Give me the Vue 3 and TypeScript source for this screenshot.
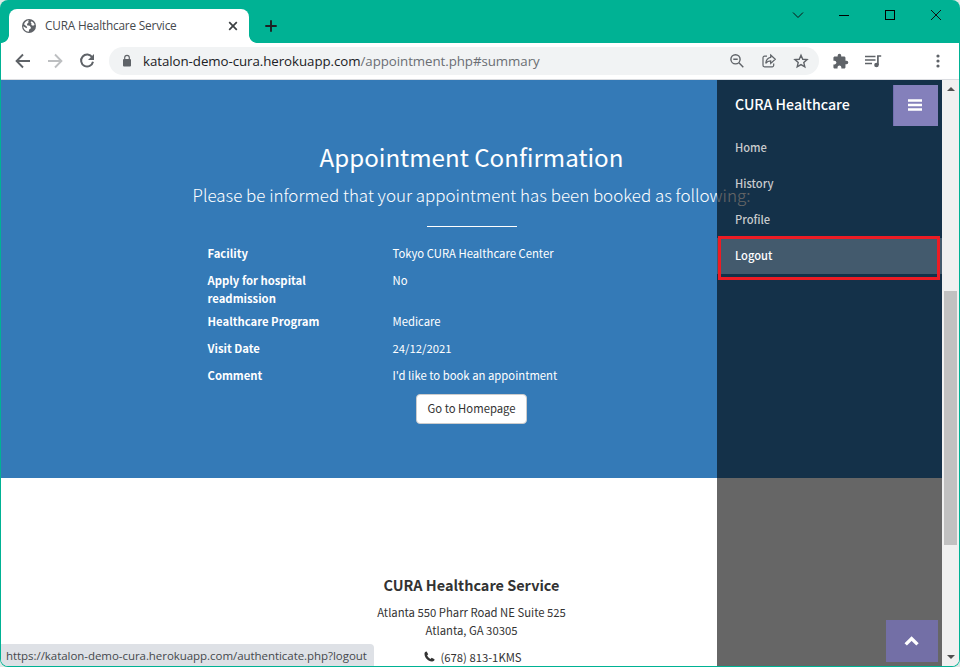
<script setup lang="ts">
interface Detail { label: string; value: string }
interface MenuItem { label: string; active?: boolean }

const details: Detail[] = [
  { label: 'Facility', value: 'Tokyo CURA Healthcare Center' },
  { label: 'Apply for hospital readmission', value: 'No' },
  { label: 'Healthcare Program', value: 'Medicare' },
  { label: 'Visit Date', value: '24/12/2021' },
  { label: 'Comment', value: "I'd like to book an appointment" },
]

const menu: MenuItem[] = [
  { label: 'Home' },
  { label: 'History' },
  { label: 'Profile' },
  { label: 'Logout', active: true },
]
</script>

<template>
  <div class="desktop">
    <div class="window">
      <header class="titlebar">
        <div class="tab">
          <svg class="globe" viewBox="0 0 16 16" width="16" height="16">
            <circle cx="8" cy="8" r="7" fill="#5f6368" />
            <path d="M8.300 2.300C7.200 3 7.100 3.700 7.500 4.500L6.200 5.800 6 7.300l2.600.5 1.300 1.500-.3 1.500-1.500.6-.3 2.300C4.800 13.500 2.400 11.300 2.200 8.300l3.300 1.900.7-1.200L3 6.300C3.700 4 5.600 2.400 8.300 2.300z" fill="#fff" />
            <path d="M10.600 3.200c1.500.7 2.600 2 3 3.800l-1.600.8-1.700-.9.2-1.500-.9-.9z" fill="#fff" />
          </svg>
          <span class="tab-title">CURA Healthcare Service</span>
          <svg class="tab-close" viewBox="0 0 10 10" width="10" height="10">
            <path d="M1.200 1.200l7.600 7.600M8.800 1.200L1.200 8.800" stroke="#3c4043" stroke-width="1.700" />
          </svg>
        </div>
        <svg class="new-tab" viewBox="0 0 12 12" width="12" height="12">
          <path d="M6 .3v11.400M.3 6h11.400" stroke="#1f2124" stroke-width="1.900" />
        </svg>
        <div class="controls">
          <svg viewBox="0 0 12 12" width="12" height="12"><path d="M1 3.500l5 5 5-5" fill="none" stroke="#111" /></svg>
          <svg viewBox="0 0 12 12" width="12" height="12"><path d="M1 6.500h10" stroke="#000" /></svg>
          <svg viewBox="0 0 12 12" width="12" height="12"><rect x="1.500" y="1.500" width="9" height="9" fill="none" stroke="#000" /></svg>
          <svg viewBox="0 0 12 12" width="12" height="12"><path d="M1 1l10 10M11 1L1 11" stroke="#111" /></svg>
        </div>
      </header>

      <nav class="toolbar">
        <div class="nav-icons">
          <svg viewBox="0 0 16 16" width="16" height="16"><path d="M8 1.500L1.600 8 8 14.500M1.800 8H15" fill="none" stroke="#5f6368" stroke-width="1.900" /></svg>
          <svg viewBox="0 0 16 16" width="16" height="16"><path d="M8 1.500L14.400 8 8 14.500M14.200 8H1" fill="none" stroke="#bdbfc1" stroke-width="1.900" /></svg>
          <svg viewBox="0 0 16 16" width="16" height="16">
            <path d="M13.200 4.300A6 6 0 1 0 14 8.800" fill="none" stroke="#5f6368" stroke-width="2" />
            <path d="M15 1v6H9z" fill="#5f6368" />
          </svg>
        </div>
        <div class="omnibox">
          <svg class="lock" viewBox="0 0 10 14" width="10" height="14">
            <rect x="1" y="5" width="8" height="7.500" rx="1" fill="#5f6368" />
            <path d="M2.700 5.500V3.600a2.300 2.300 0 0 1 4.600 0v1.900" fill="none" stroke="#5f6368" stroke-width="1.200" />
          </svg>
          <span class="url">katalon-demo-cura.herokuapp.com<span class="path">/appointment.php#summary</span></span>
          <div class="omni-icons">
            <svg viewBox="0 0 16 16" width="16" height="16" fill="none" stroke="#5f6368" stroke-width="1.400">
              <circle cx="6.500" cy="6.300" r="4.600" /><path d="M9.900 9.700l4.400 4.500M4.300 6.300h4.400" />
            </svg>
            <svg viewBox="0 0 16 16" width="16" height="16" fill="none" stroke="#5f6368" stroke-width="1.200">
              <path d="M6 3.200H3.500a1.500 1.500 0 0 0-1.500 1.500v7.600a1.500 1.500 0 0 0 1.500 1.500h7.700a1.500 1.500 0 0 0 1.500-1.500V10.500" />
              <path d="M9.700 2l4.600 4.200-4.600 4.200V7.900C7.400 7.900 6 8.600 4.700 10.400 5.100 7.200 6.800 4.900 9.700 4.400z" />
            </svg>
            <svg viewBox="0 0 16 16" width="16" height="16" fill="none" stroke="#5f6368" stroke-width="1.400">
              <path d="M8 2.200l1.750 4.050 4.350.4-3.300 2.900 1 4.300L8 11.550 4.200 13.850l1-4.300-3.300-2.900 4.350-.4z" />
            </svg>
          </div>
        </div>
        <svg class="puzzle" viewBox="0 0 24 24" width="17" height="17" fill="#5f6368">
          <path d="M20.500 11H19V7c0-1.100-.9-2-2-2h-4V3.500a2.500 2.500 0 0 0-5 0V5H4c-1.100 0-1.990.9-1.990 2v3.800H3.500c1.490 0 2.700 1.210 2.700 2.700s-1.210 2.700-2.700 2.700H2V20c0 1.100.9 2 2 2h3.800v-1.500c0-1.490 1.210-2.700 2.700-2.700s2.700 1.210 2.700 2.700V22H17c1.100 0 2-.9 2-2v-4h1.500a2.500 2.500 0 0 0 0-5z" />
        </svg>
        <svg class="queue" viewBox="0 0 17 14" width="17" height="14">
          <path d="M0 2.500h10.500M0 6h10.500M0 9.500h7" stroke="#5f6368" stroke-width="1.700" />
          <path d="M12.900 11V2h3.300" fill="none" stroke="#5f6368" stroke-width="1.700" />
          <circle cx="11.500" cy="11" r="2.300" fill="#5f6368" />
        </svg>
        <svg class="kebab" viewBox="0 0 4 14" width="4" height="14" fill="#5f6368">
          <circle cx="2" cy="2" r="1.600" /><circle cx="2" cy="7" r="1.600" /><circle cx="2" cy="12" r="1.600" />
        </svg>
      </nav>

      <div class="viewport">
        <main class="page">
          <section class="confirmation">
            <h2>Appointment Confirmation</h2>
            <p class="lead">Please be informed that your appointment has been booked as following:</p>
            <hr />
            <dl>
              <div v-for="d in details" :key="d.label" class="row">
                <dt>{{ d.label }}</dt>
                <dd>{{ d.value }}</dd>
              </div>
            </dl>
            <a class="home-btn">Go to Homepage</a>
          </section>
          <footer>
            <h4>CURA Healthcare Service</h4>
            <p>Atlanta 550 Pharr Road NE Suite 525<br />Atlanta, GA 30305</p>
            <p class="phone">
              <svg viewBox="0 0 11 11" width="11" height="11">
                <path d="M2.600.5L4.200 3.300 3.100 4.500c.8 1.600 1.900 2.600 3.400 3.400l1.200-1.100 2.800 1.500c.2 1.300-1 2.400-2.600 2.300C3.900 10.200.7 6.900.5 3.100.4 1.600 1.400.4 2.600.5z" fill="#333" />
              </svg>
              <span>(678) 813-1KMS</span>
            </p>
          </footer>
        </main>

        <aside class="sidebar">
          <div class="brand">
            <span>CURA Healthcare</span>
            <button class="toggle" type="button">
              <svg viewBox="0 0 15 13" width="15" height="13"><path d="M0 1.500h14M0 6h14M0 10.500h14" stroke="#fff" stroke-width="2.500" /></svg>
            </button>
          </div>
          <ul>
            <li v-for="m in menu" :key="m.label" :class="{ active: m.active }">{{ m.label }}</li>
          </ul>
          <button class="to-top" type="button">
            <svg viewBox="0 0 16 12" width="16" height="12"><path d="M1.700 9.400l5.900-5.800 5.900 5.800" fill="none" stroke="#fff" stroke-width="3.400" /></svg>
          </button>
        </aside>
        <div class="marker"></div>

        <div class="scrollbar">
          <svg viewBox="0 0 8 4" width="8" height="4"><path d="M0 4l4-4 4 4z" fill="#505050" /></svg>
          <div class="thumb"></div>
          <svg viewBox="0 0 8 4" width="8" height="4"><path d="M0 0l4 4 4-4z" fill="#505050" /></svg>
        </div>
        <div class="status">https://katalon-demo-cura.herokuapp.com/authenticate.php?logout</div>
      </div>
    </div>
  </div>
</template>

<style>
body { overflow: hidden; }
</style>

<style scoped>
* { box-sizing: border-box; }
h2, h4, p, dl, dd, ul, hr { margin: 0; padding: 0; }
svg { display: block; flex: none; }
button { border: 0; padding: 0; display: flex; align-items: center; justify-content: center; }

.desktop { width: 960px; height: 667px; background: #dfe9e6; }
.window {
  width: 960px; height: 667px; display: flex; flex-direction: column; overflow: hidden;
  background: #00b294; border-radius: 8px; padding: 0 1px 1px;
  font-family: "Open Sans", "Noto Sans", sans-serif;
}

.titlebar { height: 43px; display: flex; align-items: flex-start; padding-left: 8px; flex: none; }
.tab {
  position: relative; width: 240px; height: 34px; margin-top: 9px; padding: 0 11px 0 12px;
  background: #fff; border-radius: 8px 8px 0 0; display: flex; align-items: center;
}
.tab::before, .tab::after { content: ""; position: absolute; bottom: 0; width: 8px; height: 8px; }
.tab::before { left: -8px; background: radial-gradient(circle at 0 0, transparent 7.500px, #fff 8.200px); }
.tab::after { right: -8px; background: radial-gradient(circle at 100% 0, transparent 7.500px, #fff 8.200px); }
.tab-title {
  margin-left: 8px; padding-bottom: 2px; flex: 1; font-size: 11.800px; letter-spacing: -.19px; color: #45494d;
  white-space: nowrap;
}
.new-tab { margin: 20px 0 0 16px; }
.controls { margin: 9px 17px 0 auto; display: flex; gap: 34px; }

.toolbar {
  height: 37px; flex: none; display: flex; align-items: center; background: #fff;
  border-bottom: 1px solid #dadce0; padding: 0 19px 0 14px;
}
.nav-icons { display: flex; gap: 16px; }
.omnibox {
  width: 710px; height: 28px; margin-left: 14px; padding: 0 10px 0 13px; border-radius: 14px;
  background: #f1f3f4; display: flex; align-items: center;
}
.url { margin-left: 11px; flex: 1; font-size: 13.300px; letter-spacing: -.06px; color: #202124; white-space: nowrap; }
.path { color: #6a6e73; }
.omni-icons { display: flex; gap: 16px; }
.puzzle { margin-left: 13px; }
.queue { margin-left: 16px; }
.kebab { margin-left: auto; }

.viewport {
  position: relative; flex: 1; display: flex; min-height: 0; background: #fff; overflow: hidden;
  border-radius: 0 0 7px 7px;
}
.page {
  flex: 1; min-width: 0; font-family: "Noto Sans CJK SC", sans-serif; font-size: 11.300px; line-height: 18px;
  text-align: center;
}
.confirmation {
  height: 398px; background: #347ab7; color: #fff; display: flex; flex-direction: column; align-items: center;
  padding-top: 62px;
}
h2 { font-size: 24.150px; line-height: 30px; font-weight: 400; }
.lead { margin-top: 9px; font-size: 16.950px; line-height: 27px; font-weight: 300; white-space: nowrap; }
hr { width: 90px; border: 0; border-top: 1px solid #fff; margin-top: 18px; }
dl { margin-top: 17px; width: 528px; text-align: left; }
.row { display: grid; grid-template-columns: 120px 1fr; column-gap: 65px; padding-bottom: 9px; }
.row:nth-child(2) { padding-bottom: 5px; }
dt { font-weight: 700; }
.home-btn {
  width: 111px; height: 30px; margin-top: 1px; border: 1px solid #ccc; border-radius: 4px; background: #fff;
  color: #333; line-height: 27px;
}
footer { padding-top: 97px; color: #333; }
h4 { font-size: 14.460px; line-height: 20px; font-weight: 700; }
footer p { margin-top: 8px; }
footer .phone { display: flex; justify-content: center; gap: 5px; margin-top: 9px; padding-left: 3px; }
.phone svg { margin-top: 3px; }

.sidebar {
  position: absolute; top: 0; right: 17px; bottom: 0; width: 225px; background: rgba(0, 0, 0, .6);
  font-family: "Noto Sans CJK SC", sans-serif; font-weight: 500; color: #fff; display: flex; flex-direction: column;
}
.brand {
  height: 50px; padding: 5px 4px 4px 18px; display: flex; align-items: center; justify-content: space-between;
  font-size: 14.200px; flex: none;
}
.brand span { line-height: 20px; margin-top: -3px; }
.toggle { width: 45px; height: 41px; background: #8480bb; border-left: 1px solid #736fb0; }
.toggle svg { margin-right: 1px; }
ul { list-style: none; }
li { height: 36px; line-height: 34px; padding-left: 18px; font-size: 11.150px; color: #c9cbcd; }
.active { background: rgba(255, 255, 255, .2); color: #fff; }
.to-top { width: 52px; height: 42px; margin: auto 4px 4px auto; background: #736fa6; }
.marker { position: absolute; left: 717px; top: 156px; width: 222px; height: 44px; border: 3px solid #ed1c24; }

.scrollbar {
  width: 17px; flex: none; background: #f0f0f0; display: flex; flex-direction: column; align-items: center;
  padding: 7px 0;
}
.thumb { width: 13px; height: 254px; margin: 200px 0 auto; background: #c1c1c1; }
.status {
  position: absolute; left: 0; bottom: 0; width: 373px; height: 22px; padding-left: 5px; background: #dee1e6;
  border-top-right-radius: 4px; font-size: 11.500px; letter-spacing: -.05px; line-height: 23px; color: #45494d;
  white-space: nowrap;
}
</style>
